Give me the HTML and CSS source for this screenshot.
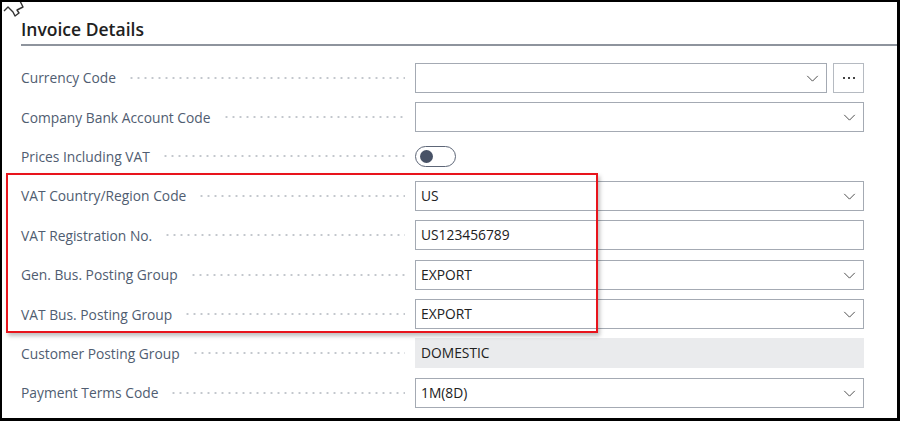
FILE: index.html
```html
<!DOCTYPE html>
<html lang="en">
<head>
  <meta charset="UTF-8">
  <title>Invoice Details</title>
  <link rel="stylesheet" href="styles.css">
</head>
<body>
  <div class="frame">
    <svg class="cursor" width="22" height="18" viewBox="0 0 22 18">
      <polyline points="1,10 5,6 10,11 12,15 16,12 14,9 20,6 17,0" fill="none" stroke="#333" stroke-width="1.4" stroke-linejoin="round"/>
    </svg>

    <section class="fasttab">
      <h2 class="fasttab-title">Invoice Details</h2>

      <div class="fields">
        <div class="field">
          <div class="caption"><span>Currency Code</span><i class="leader"></i></div>
          <div class="control">
            <div class="input select"><svg class="chevron" viewBox="0 0 14 8"><polyline points="1,1 7,7 13,1"/></svg></div>
            <button class="assist"><i></i><i></i><i></i></button>
          </div>
        </div>

        <div class="field">
          <div class="caption"><span>Company Bank Account Code</span><i class="leader"></i></div>
          <div class="control">
            <div class="input select"><svg class="chevron" viewBox="0 0 14 8"><polyline points="1,1 7,7 13,1"/></svg></div>
          </div>
        </div>

        <div class="field">
          <div class="caption"><span>Prices Including VAT</span><i class="leader"></i></div>
          <div class="control">
            <div class="toggle"><i class="knob"></i></div>
          </div>
        </div>

        <div class="field">
          <div class="caption"><span>VAT Country/Region Code</span><i class="leader"></i></div>
          <div class="control">
            <div class="input select">US<svg class="chevron" viewBox="0 0 14 8"><polyline points="1,1 7,7 13,1"/></svg></div>
          </div>
        </div>

        <div class="field">
          <div class="caption"><span>VAT Registration No.</span><i class="leader"></i></div>
          <div class="control">
            <div class="input">US123456789</div>
          </div>
        </div>

        <div class="field">
          <div class="caption"><span>Gen. Bus. Posting Group</span><i class="leader"></i></div>
          <div class="control">
            <div class="input select">EXPORT<svg class="chevron" viewBox="0 0 14 8"><polyline points="1,1 7,7 13,1"/></svg></div>
          </div>
        </div>

        <div class="field">
          <div class="caption"><span>VAT Bus. Posting Group</span><i class="leader"></i></div>
          <div class="control">
            <div class="input select">EXPORT<svg class="chevron" viewBox="0 0 14 8"><polyline points="1,1 7,7 13,1"/></svg></div>
          </div>
        </div>

        <div class="field">
          <div class="caption"><span>Customer Posting Group</span><i class="leader"></i></div>
          <div class="control">
            <div class="input readonly">DOMESTIC</div>
          </div>
        </div>

        <div class="field">
          <div class="caption"><span>Payment Terms Code</span><i class="leader"></i></div>
          <div class="control">
            <div class="input select">1M(8D)<svg class="chevron" viewBox="0 0 14 8"><polyline points="1,1 7,7 13,1"/></svg></div>
          </div>
        </div>
      </div>

      <div class="highlight"></div>
    </section>
  </div>
</body>
</html>
```

FILE: styles.css
```css
html, body {
  margin: 0;
  height: 100%;
}

body {
  font-family: 'Open Sans', 'Noto Sans', sans-serif;
  background: #000;
}

.frame {
  position: relative;
  box-sizing: border-box;
  height: 421px;
  border-style: solid;
  border-color: #000;
  border-width: 2px 3px 3px 2px;
  background: #fff;
  overflow: hidden;
}

.cursor {
  position: absolute;
  left: 1px;
  top: -1px;
}

.fasttab {
  position: relative;
  padding: 16px 0 0 19px;
}

.fasttab-title {
  margin: 0;
  padding-bottom: 4px;
  font-size: 17.5px;
  font-weight: 600;
  color: #212121;
  border-bottom: 2px solid #8e949d;
  line-height: 22px;
}

.fields {
  margin-top: 12px;
}

.field {
  display: flex;
  align-items: center;
  height: 39.4px;
}

.caption {
  display: flex;
  align-items: center;
  width: 384px;
  margin-right: 10px;
  font-size: 13.8px;
  color: #505d71;
}

.leader {
  flex: 1;
  height: 4px;
  margin-left: 12px;
  background-image: radial-gradient(circle, #c3c7cd 0.9px, transparent 1.3px);
  background-size: 7px 4px;
  background-repeat: repeat-x;
}

.control {
  display: flex;
  gap: 6px;
  width: 449px;
}

.input {
  position: relative;
  flex: 1;
  box-sizing: border-box;
  height: 30px;
  padding: 0 30px 0 5px;
  border: 1px solid #a4aab3;
  font-size: 13.8px;
  line-height: 28px;
  color: #212121;
}

.input.readonly {
  border-color: #eaebed;
  background: #eaebed;
}

.chevron {
  position: absolute;
  right: 7px;
  top: 11px;
  width: 13px;
  height: 7px;
  fill: none;
  stroke: #4a4a4a;
  stroke-width: 1.1;
}

.assist {
  display: flex;
  align-items: center;
  justify-content: center;
  gap: 3px;
  width: 31px;
  height: 30px;
  padding: 0;
  border: 1px solid #b5bac1;
  background: #fff;
}

.assist i {
  width: 2px;
  height: 2px;
  background: #444;
}

.toggle {
  box-sizing: border-box;
  width: 41px;
  height: 21px;
  border: 1px solid #5d6677;
  border-radius: 11px;
  display: flex;
  align-items: center;
  padding-left: 4px;
}

.knob {
  width: 13px;
  height: 13px;
  border-radius: 50%;
  background: #485266;
}

.highlight {
  position: absolute;
  left: 4px;
  top: 171px;
  width: 592px;
  height: 160px;
  box-sizing: border-box;
  border: 2px solid #e8141c;
  box-shadow: 2px 3px 4px rgba(0, 0, 0, 0.25);
}
```
